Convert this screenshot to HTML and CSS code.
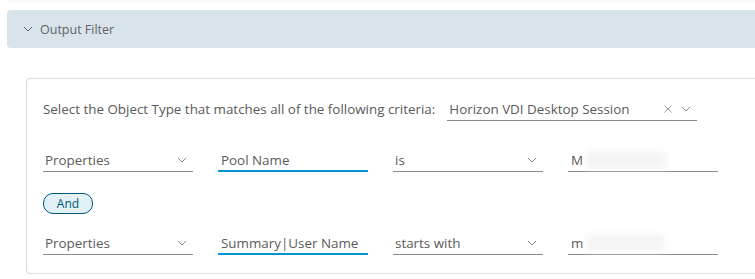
FILE: index.html
```html
<!DOCTYPE html>
<html lang="en">
<head>
  <meta charset="UTF-8">
  <title>Output Filter</title>
  <link rel="stylesheet" href="styles.css">
</head>
<body>
  <div class="top-strip"></div>
  <div class="accordion-header">
    <svg class="chev" width="10" height="6" viewBox="0 0 10 6"><path d="M1 1 L5 5 L9 1" fill="none" stroke="#666" stroke-width="1"/></svg>
    <span>Output Filter</span>
  </div>

  <div class="card">
    <div class="row type-row">
      <span class="label">Select the Object Type that matches all of the following criteria:</span>
      <div class="field select wide">
        <span class="value">Horizon VDI Desktop Session</span>
        <svg class="clear" width="8" height="8" viewBox="0 0 8 8"><path d="M0.5 0.5 L7.5 7.5 M7.5 0.5 L0.5 7.5" fill="none" stroke="#999" stroke-width="1"/></svg>
        <svg class="chev" width="10" height="6" viewBox="0 0 10 6"><path d="M1 1 L5 5 L9 1" fill="none" stroke="#888" stroke-width="1"/></svg>
      </div>
    </div>

    <div class="row">
      <div class="field select">
        <span class="value">Properties</span>
        <svg class="chev" width="10" height="6" viewBox="0 0 10 6"><path d="M1 1 L5 5 L9 1" fill="none" stroke="#888" stroke-width="1"/></svg>
      </div>
      <div class="field input active"><span class="value">Pool Name</span></div>
      <div class="field select">
        <span class="value">is</span>
        <svg class="chev" width="10" height="6" viewBox="0 0 10 6"><path d="M1 1 L5 5 L9 1" fill="none" stroke="#888" stroke-width="1"/></svg>
      </div>
      <div class="field input"><span class="value">M</span><span class="blur b1"></span></div>
    </div>

    <div class="row and-row">
      <span class="and-btn">And</span>
    </div>

    <div class="row">
      <div class="field select">
        <span class="value">Properties</span>
        <svg class="chev" width="10" height="6" viewBox="0 0 10 6"><path d="M1 1 L5 5 L9 1" fill="none" stroke="#888" stroke-width="1"/></svg>
      </div>
      <div class="field input active"><span class="value">Summary|User Name</span></div>
      <div class="field select">
        <span class="value">starts with</span>
        <svg class="chev" width="10" height="6" viewBox="0 0 10 6"><path d="M1 1 L5 5 L9 1" fill="none" stroke="#888" stroke-width="1"/></svg>
      </div>
      <div class="field input"><span class="value">m</span><span class="blur b2"></span></div>
    </div>
  </div>
</body>
</html>
```

FILE: styles.css
```css
body {
  font-family: 'Open Sans', 'Noto Sans', sans-serif;
  margin: 0;
  padding: 0;
  background: white;
  color: #5a5a5a;
  font-size: 13.4px;
  overflow: hidden;
}

.top-strip {
  margin-left: 7px;
  height: 3px;
  background: #f8f8f8;
  border-radius: 0 0 4px 4px;
}

.accordion-header {
  margin: 7px 0 0 7px;
  height: 38px;
  background: #d9e4ea;
  border-radius: 4px 0 0 4px;
  display: flex;
  align-items: center;
  padding-left: 16px;
  gap: 7px;
  font-size: 12.5px;
  color: #5f6367;
}

.card {
  margin: 30px 0 0 26px;
  height: 194px;
  border: 1px solid #dddddd;
  border-right: none;
  border-radius: 4px 0 0 4px;
  padding: 0 0 0 16px;
}

.row {
  display: flex;
  align-items: flex-end;
  gap: 25px;
}

.type-row {
  margin-top: 19px;
  gap: 12px;
}

.type-row .label {
  padding-bottom: 3px;
}

.field {
  width: 150px;
  height: 23px;
  box-sizing: border-box;
  border-bottom: 1px solid #8c8c8c;
  display: flex;
  align-items: center;
  padding: 0 2px 0 2px;
  color: #5a5a5a;
}

.field.input {
  padding-left: 3px;
}

.field.wide {
  width: 250px;
}

.field.active {
  border-bottom: 2px solid #0095d3;
}

.field .value {
  flex: 1;
  white-space: nowrap;
}

.field.input .value {
  flex: none;
}

.field .chev {
  margin-right: 4px;
}

.clear {
  margin-right: 9px;
}

.blur {
  display: inline-block;
  height: 18px;
  background: #f0f0f0;
  filter: blur(3px);
  margin-left: 3px;
  opacity: 0.7;
}

.b1 { width: 80px; }
.b2 { width: 78px; }

.row + .row {
  margin-top: 28px;
}

.and-row {
  margin-top: 21px !important;
}

.and-row + .row {
  margin-top: 18px !important;
}

.and-btn {
  display: inline-block;
  width: 48px;
  height: 19px;
  line-height: 19px;
  text-align: center;
  border: 1px solid #00567a;
  border-radius: 10px;
  background: #e1f1f6;
  color: #00567a;
  font-size: 12px;
}
```
